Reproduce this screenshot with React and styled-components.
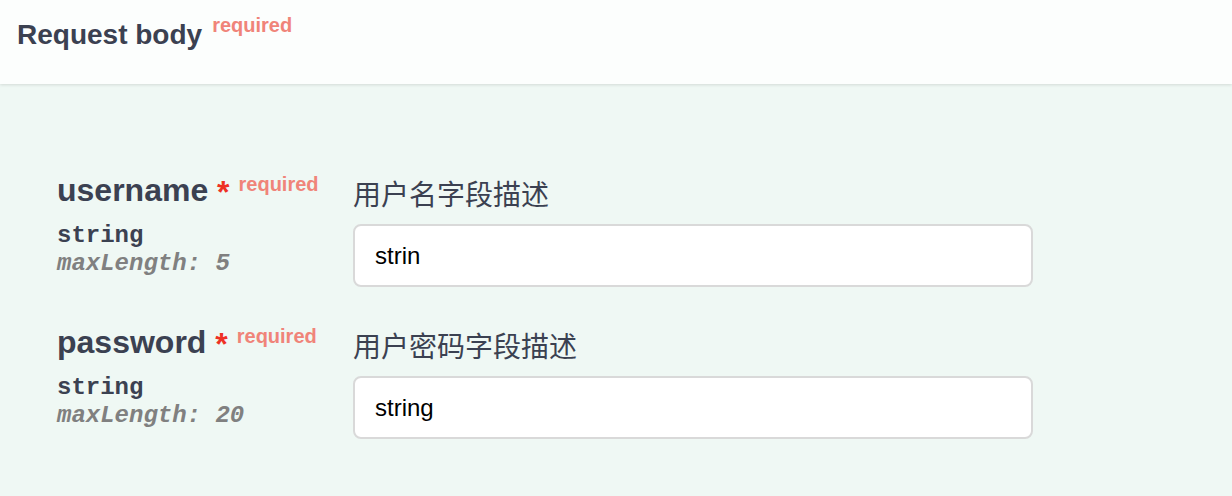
import React from "react";
import styled, { createGlobalStyle } from "styled-components";

const GlobalStyle = createGlobalStyle`
  html, body {
    margin: 0;
    padding: 0;
    background: #eff8f4;
  }
  * { box-sizing: border-box; }
`;

const Page = styled.div`
  min-height: 100vh;
  background: #eff8f4;
  font-family: "Liberation Sans", Arial, "Noto Sans CJK SC", sans-serif;
  color: #3b4151;
`;

const SectionHeader = styled.div`
  height: 84px;
  padding: 15px 17px 0;
  background: #fcfefd;
  box-shadow: 0 1px 3px rgba(0, 0, 0, 0.12);
  display: flex;
  align-items: flex-start;
  position: relative;
  z-index: 1;
`;

const Title = styled.h4`
  margin: 0;
  font-size: 28px;
  line-height: 40px;
  font-weight: 700;
  color: #3b4151;
`;

const RequiredMark = styled.span`
  font-size: 20px;
  line-height: 20px;
  font-weight: 700;
  color: #f08479;
  vertical-align: ${(p) => p.$lift}px;
  margin-left: ${(p) => p.$gap}px;
`;

const Body = styled.div`
  padding: 84px 0 40px 57px;
  display: grid;
  row-gap: 33px;
`;

const ParamRow = styled.div`
  display: grid;
  grid-template-columns: 296px 680px;
  align-items: start;
`;

const NameCell = styled.div`
  display: flex;
  flex-direction: column;
`;

const ParamName = styled.div`
  padding-top: 2px;
  font-size: 32px;
  line-height: 40px;
  font-weight: 700;
  color: #3b4151;
  white-space: nowrap;
`;

const Asterisk = styled.span`
  color: #ee3124;
  font-size: 32px;
  line-height: 20px;
  vertical-align: -2px;
`;

const ParamType = styled.div`
  margin-top: 12px;
  font-family: "Liberation Mono", "Courier New", monospace;
  font-size: 24px;
  line-height: 28px;
  font-weight: 700;
  color: #3b4151;
`;

const ParamExtension = styled.div`
  font-family: "Liberation Mono", "Courier New", monospace;
  font-size: 24px;
  line-height: 27px;
  font-weight: 700;
  font-style: italic;
  color: #808080;
`;

const DescCell = styled.div`
  padding-top: 5px;
  display: flex;
  flex-direction: column;
`;

const Description = styled.div`
  font-family: "Noto Sans CJK SC", "Liberation Sans", sans-serif;
  font-size: 28px;
  line-height: 40px;
  color: #3b4151;
`;

const TextInput = styled.input`
  margin-top: 11px;
  width: 680px;
  height: 63px;
  padding: 0 20px;
  border: 2px solid #d9d9d9;
  border-radius: 8px;
  background: #fff;
  font-family: "Liberation Sans", Arial, sans-serif;
  font-size: 24px;
  color: #000;
  outline: none;
`;

const params = [
  {
    name: "username",
    type: "string",
    ext: "maxLength: 5",
    desc: "用户名字段描述",
    value: "strin",
  },
  {
    name: "password",
    type: "string",
    ext: "maxLength: 20",
    desc: "用户密码字段描述",
    value: "string",
  },
];

export default function App() {
  return (
    <Page>
      <GlobalStyle />
      <SectionHeader>
        <Title>
          Request body
          <RequiredMark $lift={12} $gap={10}>required</RequiredMark>
        </Title>
      </SectionHeader>
      <Body>
        {params.map((p) => (
          <ParamRow key={p.name}>
            <NameCell>
              <ParamName>
                {p.name}
                <Asterisk>&nbsp;*</Asterisk>
                <RequiredMark $lift={10} $gap={9}>required</RequiredMark>
              </ParamName>
              <ParamType>{p.type}</ParamType>
              <ParamExtension>{p.ext}</ParamExtension>
            </NameCell>
            <DescCell>
              <Description>{p.desc}</Description>
              <TextInput defaultValue={p.value} />
            </DescCell>
          </ParamRow>
        ))}
      </Body>
    </Page>
  );
}
